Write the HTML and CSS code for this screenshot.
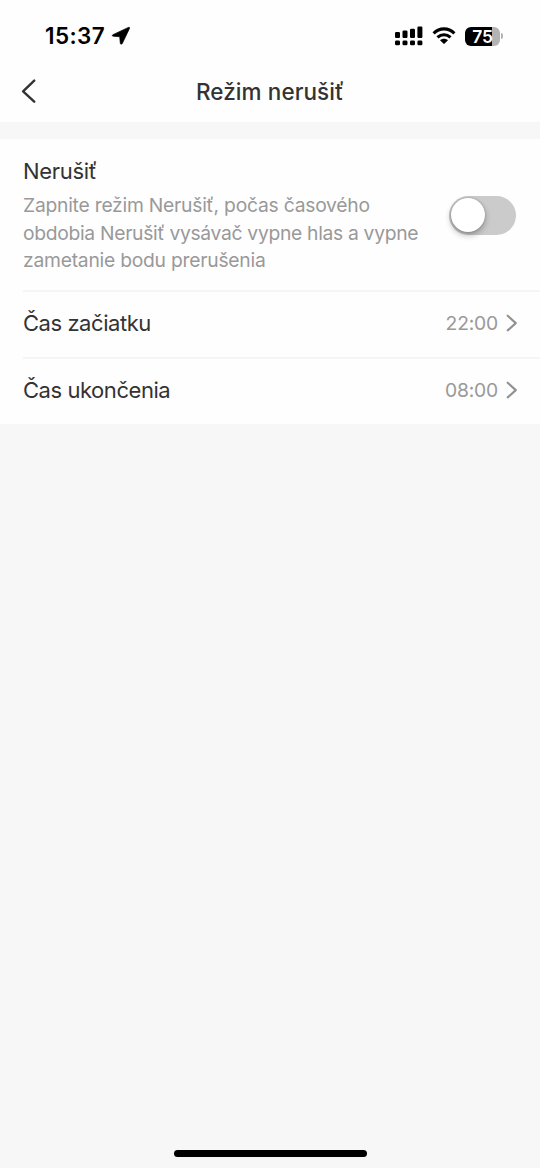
FILE: index.html
```html
<!DOCTYPE html>
<html lang="sk">
<head>
<meta charset="utf-8">
<title>Režim nerušiť</title>
<link rel="stylesheet" href="styles.css">
</head>
<body>
<div class="screen">
  <header class="top">
    <div class="status">
      <span class="clock">15:37</span>
      <svg class="plane" width="20" height="20" viewBox="0 0 20 20"><path d="M17.4 1.4 1.9 8.7C.9 9.3 1.1 10.2 2.2 10.2L8.7 10.7 9.3 17.2C9.4 18.4 10.7 18.6 11.3 17.5L18.5 2.4C18.8 1.5 18.3 1 17.4 1.4Z"/></svg>
      <div class="indicators">
        <svg width="28" height="20" viewBox="0 0 28 20"><rect y="6" width="5" height="6" rx="1.2"/><rect x="7.5" y="4.5" width="5" height="7.5" rx="1.2"/><rect x="15" y="2.7" width="5" height="9.3" rx="1.2"/><rect x="22.4" y=".5" width="5" height="11.5" rx="1.2"/><rect y="14.5" width="5" height="4.8" rx="1.4"/><rect x="7.5" y="14.5" width="5" height="4.8" rx="1.4"/><rect x="15" y="14.5" width="5" height="4.8" rx="1.4"/><rect x="22.4" y="14.5" width="5" height="4.8" rx="1.4"/></svg>
        <svg class="wifi" width="24" height="20" viewBox="0 0 24 20"><path class="arc" d="M1.6 7.4C7.6 1.4 16.4 1.4 22.4 7.4M5.5 11.4C9.3 7.8 14.7 7.8 18.5 11.4"/><path d="M8 14.2C10.3 12.2 13.7 12.2 16 14.2L12.6 17.6Q12 18.2 11.4 17.6Z"/></svg>
        <span class="battery"><span class="percent">75</span></span><span class="nub"></span>
      </div>
    </div>
    <nav class="nav">
      <svg class="back" width="16" height="24" viewBox="0 0 16 24"><path d="M13.2 1.6 2.1 12.3 13.2 22.7"/></svg>
      <h1 class="title">Režim nerušiť</h1>
    </nav>
  </header>
  <main class="list">
    <section class="item dnd">
      <div class="copy">
        <h2 class="label name">Nerušiť</h2>
        <p class="desc"><span class="l1">Zapnite režim Nerušiť, počas časového</span><br><span class="l2">obdobia Nerušiť vysávač vypne hlas a vypne</span><br><span class="l3">zametanie bodu prerušenia</span></p>
      </div>
      <div class="toggle"><div class="knob"></div></div>
    </section>
    <section class="item">
      <span class="label start">Čas začiatku</span>
      <span class="time">22:00</span>
      <svg class="go" width="12" height="18" viewBox="0 0 12 18"><path d="M1.7 1.7 9.8 9.1 1.7 16.4"/></svg>
    </section>
    <section class="item">
      <span class="label end">Čas ukončenia</span>
      <span class="time">08:00</span>
      <svg class="go" width="12" height="18" viewBox="0 0 12 18"><path d="M1.7 1.7 9.8 9.1 1.7 16.4"/></svg>
    </section>
  </main>
  <div class="home"></div>
</div>
</body>
</html>
```
FILE: styles.css
```css
* { box-sizing: border-box; }
body { margin: 0; font-family: Inter, "Liberation Sans", sans-serif; background: #f7f7f7; color: #333; }
svg { display: block; flex: none; }
h1, h2, p { margin: 0; font-weight: 400; white-space: nowrap; }
.screen { width: 540px; height: 1168px; display: flex; flex-direction: column; align-items: center; overflow: hidden; }
.top { width: 100%; height: 122px; background: #fefefe; }
.status { height: 60px; padding: 12px 36px 0 45px; display: flex; align-items: center; color: #000; }
.clock { width: 60px; padding-bottom: 2px; font-size: 22.5px; font-weight: 600; letter-spacing: .4px; white-space: nowrap; }
.plane { margin-left: 6px; }
.plane path { stroke: #000; stroke-width: .7; }
.indicators { margin-left: auto; display: flex; align-items: center; }
.wifi { margin-left: 9px; }
.arc { fill: none; stroke: #000; stroke-width: 3.1; }
.battery { width: 35px; height: 19px; margin-left: 9px; border-radius: 6px; background: linear-gradient(90deg, #000 76%, #b3b3b3 76%); color: #fff; display: flex; align-items: center; justify-content: center; }
.percent { font-size: 17.5px; font-weight: 600; line-height: 19px; letter-spacing: -.3px; }
.nub { width: 2px; height: 6px; margin: 0 1px; border-radius: 0 2px 2px 0; background: #b3b3b3; }
.nav { height: 62px; padding: 0 21px; display: grid; grid-template-columns: 40px 1fr 40px; align-items: center; }
.back path { fill: none; stroke: #333; stroke-width: 2.4; stroke-linecap: round; stroke-linejoin: round; }
.title { text-align: center; font-size: 22.5px; font-weight: 500; letter-spacing: .08px; }
.list { width: 100%; margin-top: 17px; background: #fefefe; }
.item { height: 67px; margin-left: 23px; padding: 0 22px 3px 0; display: flex; align-items: center; }
.item + .item { border-top: 2px solid #f5f5f5; }
.dnd { height: 151px; align-items: flex-start; padding: 18px 24px 0 0; }
.label { font-size: 22px; line-height: 28px; letter-spacing: -.45px; white-space: nowrap; }
.name { letter-spacing: -.3px; }
.desc { margin-top: 7px; font-size: 19.3px; line-height: 27.7px; letter-spacing: -.24px; color: #999; }
.l2 { letter-spacing: -.31px; }
.toggle { width: 67px; height: 39px; margin: 39px 0 0 auto; padding: 2px; border-radius: 20px; background: #cbcbcb; }
.knob { width: 34px; height: 34px; border-radius: 50%; background: #fff; box-shadow: 0 3px 6px rgba(0,0,0,.3), 0 0 2px rgba(0,0,0,.25); }
.time { margin-left: auto; font-size: 19.3px; letter-spacing: -.2px; color: #999; }
.go { margin-left: 8px; }
.go path { fill: none; stroke: #919191; stroke-width: 2.1; stroke-linecap: round; stroke-linejoin: round; }
.home { width: 193px; height: 7px; margin-top: auto; margin-bottom: 11px; border-radius: 4px; background: #000; }
```
